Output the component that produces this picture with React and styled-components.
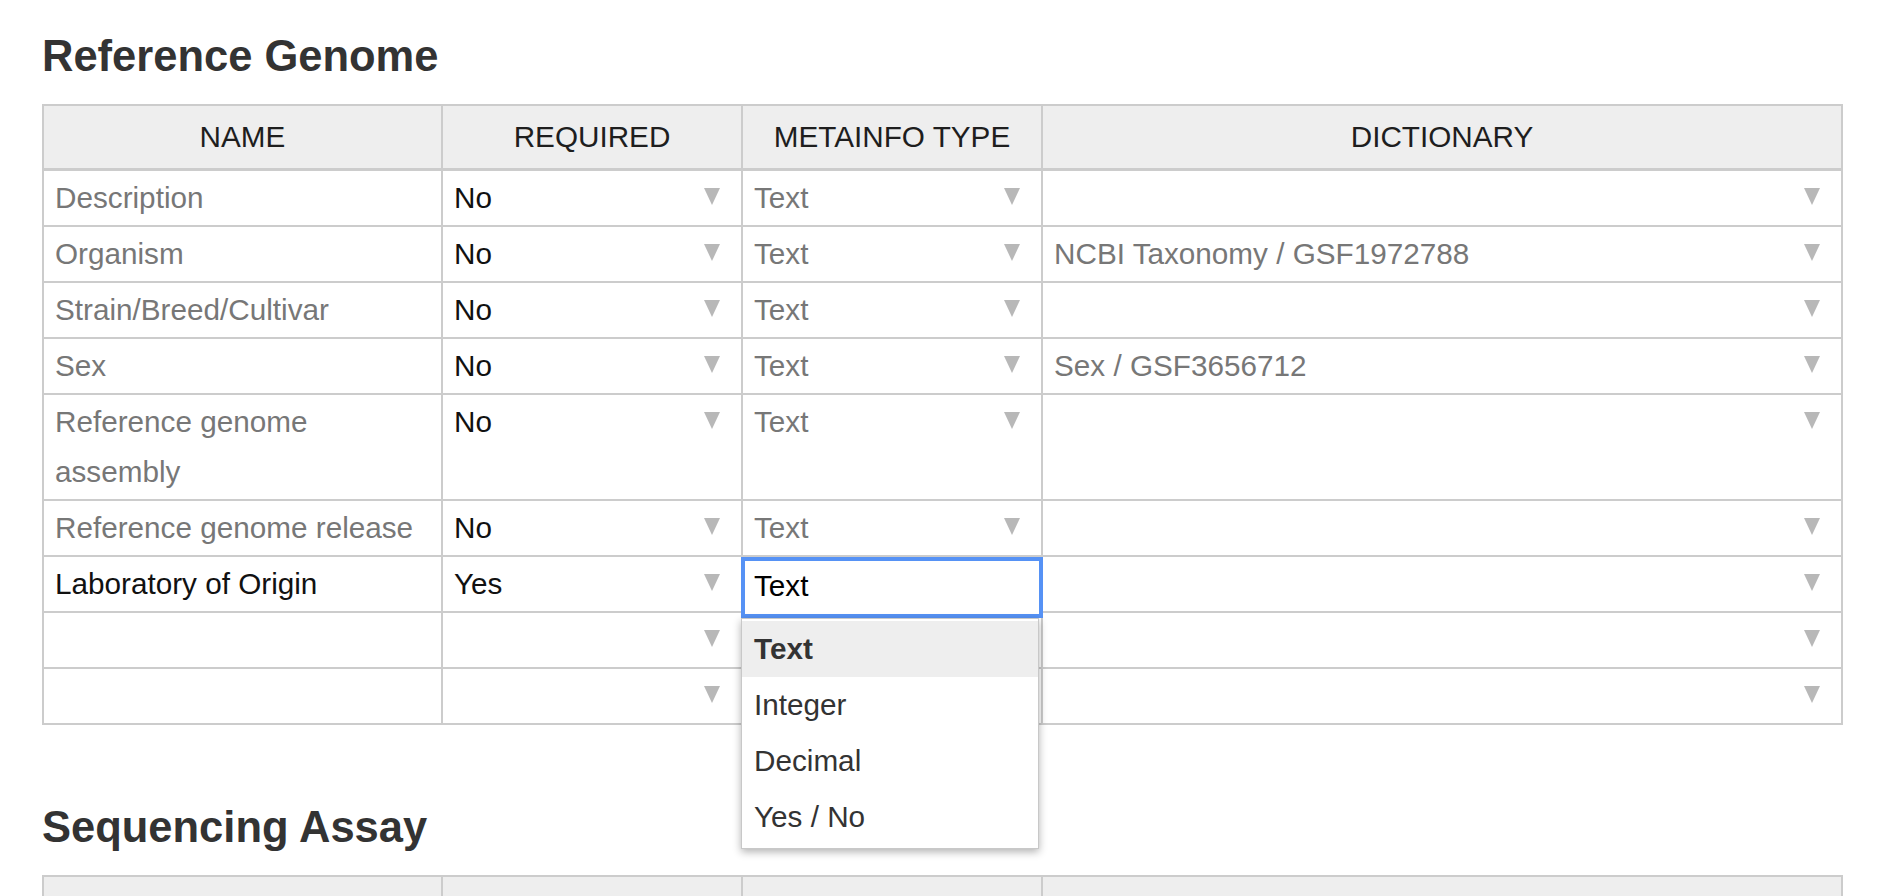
import React from "react";
import styled, { createGlobalStyle } from "styled-components";

const GlobalStyle = createGlobalStyle`
  body {
    margin: 0;
    background: #fff;
    font-family: "Liberation Sans", Arial, Helvetica, sans-serif;
  }
`;

const Page = styled.div`
  padding: 31px 42px 0 42px;
`;

const Section = styled.section`
  & + & {
    margin-top: 77px;
  }
`;

const Title = styled.h2`
  margin: 0 0 23px;
  font-size: 43.5px;
  line-height: 50px;
  font-weight: 700;
  color: #333;
`;

const Grid = styled.table`
  width: 1799px;
  table-layout: fixed;
  border-collapse: collapse;
  font-size: 29.7px;
`;

const Head = styled.th`
  height: 62px;
  padding: 0;
  background: #eee;
  border: 2px solid #ccc;
  border-bottom-width: 3px;
  font-weight: 400;
  color: #1e1e1e;
  text-align: center;
  vertical-align: middle;
`;

const Cell = styled.td`
  position: relative;
  padding: 2px 0 2px 11px;
  border: 2px solid #ccc;
  line-height: 50px;
  vertical-align: top;
  color: ${(p) => (p.$dim ? "#777" : "#111")};
`;

const CellBody = styled.div`
  display: flex;
  align-items: flex-start;
  min-height: 50px;
`;

const Value = styled.span`
  flex: 1;
  min-width: 0;
`;

const Arrow = styled.span`
  flex: none;
  width: 0;
  height: 0;
  margin: 15px 21px 0 8px;
  border-left: 8.5px solid transparent;
  border-right: 8.5px solid transparent;
  border-top: 17px solid #b8b8b8;
`;

const Editor = styled.div`
  position: absolute;
  z-index: 5;
  top: 0;
  left: -2px;
  right: -2px;
  height: 61px;
  box-sizing: border-box;
  padding: 0 9px;
  border: 4px solid #5692f5;
  background: #fff;
  color: #000;
  line-height: 49px;
`;

const Menu = styled.ul`
  position: absolute;
  z-index: 6;
  top: 61px;
  left: -2px;
  width: 298px;
  margin: 0;
  padding: 2px 0 3px;
  list-style: none;
  box-sizing: border-box;
  background: #fff;
  border: 1px solid #c8c8c8;
  box-shadow: 0 3px 8px rgba(0, 0, 0, 0.3);
`;

const MenuItem = styled.li`
  height: 56px;
  padding-left: 12px;
  line-height: 56px;
  color: #333;
  background: ${(p) => (p.$active ? "#eee" : "transparent")};
  font-weight: ${(p) => (p.$active ? 700 : 400)};
`;

const columns = [
  { label: "NAME", width: 399 },
  { label: "REQUIRED", width: 300 },
  { label: "METAINFO TYPE", width: 300 },
  { label: "DICTIONARY", width: 800 },
];

const rows = [
  { name: "Description", req: "No", type: "Text", dict: "" },
  { name: "Organism", req: "No", type: "Text", dict: "NCBI Taxonomy / GSF1972788" },
  { name: "Strain/Breed/Cultivar", req: "No", type: "Text", dict: "" },
  { name: "Sex", req: "No", type: "Text", dict: "Sex / GSF3656712" },
  { name: "Reference genome assembly", req: "No", type: "Text", dict: "" },
  { name: "Reference genome release", req: "No", type: "Text", dict: "" },
  { name: "Laboratory of Origin", req: "Yes", type: "Text", dict: "", editing: true, own: true },
  { name: "", req: "", type: "", dict: "" },
  { name: "", req: "", type: "", dict: "" },
];

const types = ["Text", "Integer", "Decimal", "Yes / No"];

const HeadRow = () => (
  <>
    <colgroup>
      {columns.map((c) => (
        <col key={c.label} style={{ width: c.width }} />
      ))}
    </colgroup>
    <thead>
      <tr>
        {columns.map((c) => (
          <Head key={c.label}>{c.label}</Head>
        ))}
      </tr>
    </thead>
  </>
);

const SelectCell = ({ value, dim }) => (
  <Cell $dim={dim}>
    <CellBody>
      <Value>{value}</Value>
      <Arrow />
    </CellBody>
  </Cell>
);

const TypeEditor = ({ value }) => (
  <Cell>
    <CellBody />
    <Editor>{value}</Editor>
    <Menu>
      {types.map((t) => (
        <MenuItem key={t} $active={t === value}>
          {t}
        </MenuItem>
      ))}
    </Menu>
  </Cell>
);

export default function App() {
  return (
    <>
      <GlobalStyle />
      <Page>
        <Section>
          <Title>Reference Genome</Title>
          <Grid>
            <HeadRow />
            <tbody>
              {rows.map((r, i) => (
                <tr key={i}>
                  <Cell $dim={!r.own}>
                    <CellBody>
                      <Value>{r.name}</Value>
                    </CellBody>
                  </Cell>
                  <SelectCell value={r.req} />
                  {r.editing ? (
                    <TypeEditor value={r.type} />
                  ) : (
                    <SelectCell value={r.type} dim />
                  )}
                  <SelectCell value={r.dict} dim />
                </tr>
              ))}
            </tbody>
          </Grid>
        </Section>
        <Section>
          <Title>Sequencing Assay</Title>
          <Grid>
            <HeadRow />
          </Grid>
        </Section>
      </Page>
    </>
  );
}
